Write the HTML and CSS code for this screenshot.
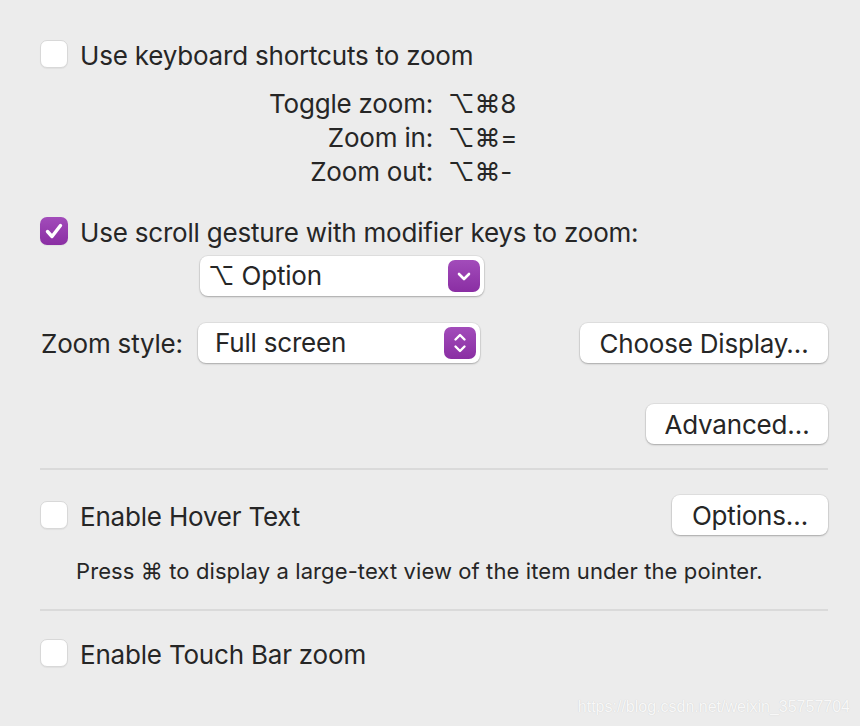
FILE: index.html
```html
<!DOCTYPE html>
<html lang="en">
<head>
    <meta charset="UTF-8">
    <title>Zoom</title>
    <link rel="stylesheet" href="styles.css">
</head>
<body>
    <div class="pane">
        <div class="check-row">
            <span class="checkbox"></span>
            <span class="check-label">Use keyboard shortcuts to zoom</span>
        </div>

        <div class="shortcuts">
            <span class="sc-label">Toggle zoom:</span><span class="sc-key">⌥⌘8</span>
            <span class="sc-label">Zoom in:</span><span class="sc-key">⌥⌘=</span>
            <span class="sc-label">Zoom out:</span><span class="sc-key">⌥⌘-</span>
        </div>

        <div class="check-row scroll-row">
            <span class="checkbox checked">
                <svg width="28" height="28" viewBox="0 0 28 28"><path d="M7.5 14.5l4.5 5 8.5-11" fill="none" stroke="#fff" stroke-width="3.4" stroke-linecap="round" stroke-linejoin="round"/></svg>
            </span>
            <span class="check-label">Use scroll gesture with modifier keys to zoom:</span>
        </div>

        <div class="popup modifier-popup">
            <span class="popup-text">⌥ Option</span>
            <span class="popup-btn">
                <svg width="32" height="32" viewBox="0 0 32 32"><path d="M11 14l5 5 5-5" fill="none" stroke="#fff" stroke-width="2.6" stroke-linecap="round" stroke-linejoin="round"/></svg>
            </span>
        </div>

        <div class="style-row">
            <span class="style-label">Zoom style:</span>
            <div class="popup style-popup">
                <span class="popup-text">Full screen</span>
                <span class="popup-btn">
                    <svg width="32" height="32" viewBox="0 0 32 32"><path d="M11.5 12.5l4.5-4.5 4.5 4.5M11.5 19.5l4.5 4.5 4.5-4.5" fill="none" stroke="#fff" stroke-width="2.4" stroke-linecap="round" stroke-linejoin="round"/></svg>
                </span>
            </div>
            <button class="push-btn choose-btn">Choose Display…</button>
        </div>

        <div class="advanced-row">
            <button class="push-btn advanced-btn">Advanced…</button>
        </div>

        <div class="separator"></div>

        <div class="hover-row">
            <div class="check-row">
                <span class="checkbox"></span>
                <span class="check-label">Enable Hover Text</span>
            </div>
            <button class="push-btn options-btn">Options…</button>
        </div>

        <p class="hint">Press ⌘ to display a large-text view of the item under the pointer.</p>

        <div class="separator second"></div>

        <div class="check-row touch-row">
            <span class="checkbox"></span>
            <span class="check-label">Enable Touch Bar zoom</span>
        </div>
    </div>

    <div class="watermark">https://blog.csdn.net/weixin_35757704</div>
</body>
</html>
```

FILE: styles.css
```css
body {
    margin: 0;
    width: 860px;
    height: 726px;
    background-color: #ececec;
    font-family: Inter, "DejaVu Sans", sans-serif;
    font-size: 26px;
    letter-spacing: -0.2px;
    color: #262626;
    position: relative;
    overflow: hidden;
}
.pane {
    padding: 40px 32px 0 40px;
}
.check-row {
    display: flex;
    align-items: center;
    gap: 12px;
    height: 28px;
    line-height: 28px;
}
.check-label {
    padding-top: 3px;
}
.checkbox {
    width: 28px;
    height: 28px;
    box-sizing: border-box;
    border-radius: 7px;
    background-color: #fff;
    border: 1px solid #d8d8d8;
    box-shadow: 0 1px 1px rgba(0,0,0,0.05);
    flex-shrink: 0;
}
.checkbox.checked {
    border: none;
    background: linear-gradient(#a24cba, #8a2ea3);
}
.checkbox svg {
    display: block;
}
.shortcuts {
    display: grid;
    grid-template-columns: 393px auto;
    column-gap: 15px;
    margin-top: 18px;
    line-height: 34px;
    padding-top: 1px;
}
.sc-label {
    text-align: right;
}
.scroll-row {
    margin-top: 28px;
}
.popup {
    display: flex;
    align-items: center;
    justify-content: space-between;
    height: 40px;
    box-sizing: border-box;
    background-color: #fff;
    border-radius: 8px;
    box-shadow: 0 0 0 1px rgba(0,0,0,0.05), 0 1px 2px rgba(0,0,0,0.25);
    padding: 0 4px 0 8px;
}
.modifier-popup {
    width: 284px;
    margin: 11px 0 0 160px;
}
.popup-text {
    line-height: 40px;
}
.popup-btn {
    width: 32px;
    height: 32px;
    border-radius: 7px;
    background: linear-gradient(#a24cba, #8a2ea3);
}
.popup-btn svg {
    display: block;
}
.style-row {
    display: flex;
    align-items: center;
    margin-top: 27px;
}
.style-label {
    width: 158px;
    padding-left: 1px;
    box-sizing: border-box;
}
.style-popup {
    width: 282px;
    padding-left: 17px;
}
.push-btn {
    height: 40px;
    border: none;
    border-radius: 8px;
    background-color: #fff;
    box-shadow: 0 0 0 1px rgba(0,0,0,0.05), 0 1px 2px rgba(0,0,0,0.25);
    font-family: inherit;
    font-size: 26px;
    letter-spacing: -0.2px;
    color: #262626;
    padding: 0;
}
.choose-btn {
    width: 248px;
    margin-left: auto;
}
.advanced-row {
    display: flex;
    justify-content: flex-end;
    margin-top: 41px;
}
.advanced-btn {
    width: 182px;
}
.separator {
    height: 2px;
    background-color: #dadada;
    margin-top: 24px;
}
.hover-row {
    display: flex;
    align-items: center;
    justify-content: space-between;
    margin-top: 25px;
}
.options-btn {
    width: 156px;
}
.hint {
    margin: 21px 0 0 36px;
    font-size: 22px;
    letter-spacing: 0.1px;
    line-height: 30px;
}
.separator.second {
    margin-top: 23px;
}
.touch-row {
    margin-top: 28px;
}
.watermark {
    position: absolute;
    right: 10px;
    bottom: 10px;
    font-family: "Liberation Sans", Arial, sans-serif;
    font-size: 16px;
    letter-spacing: 0;
    color: #f8f8f8;
    text-shadow: 0 0 1px rgba(0,0,0,0.15);
}
```
